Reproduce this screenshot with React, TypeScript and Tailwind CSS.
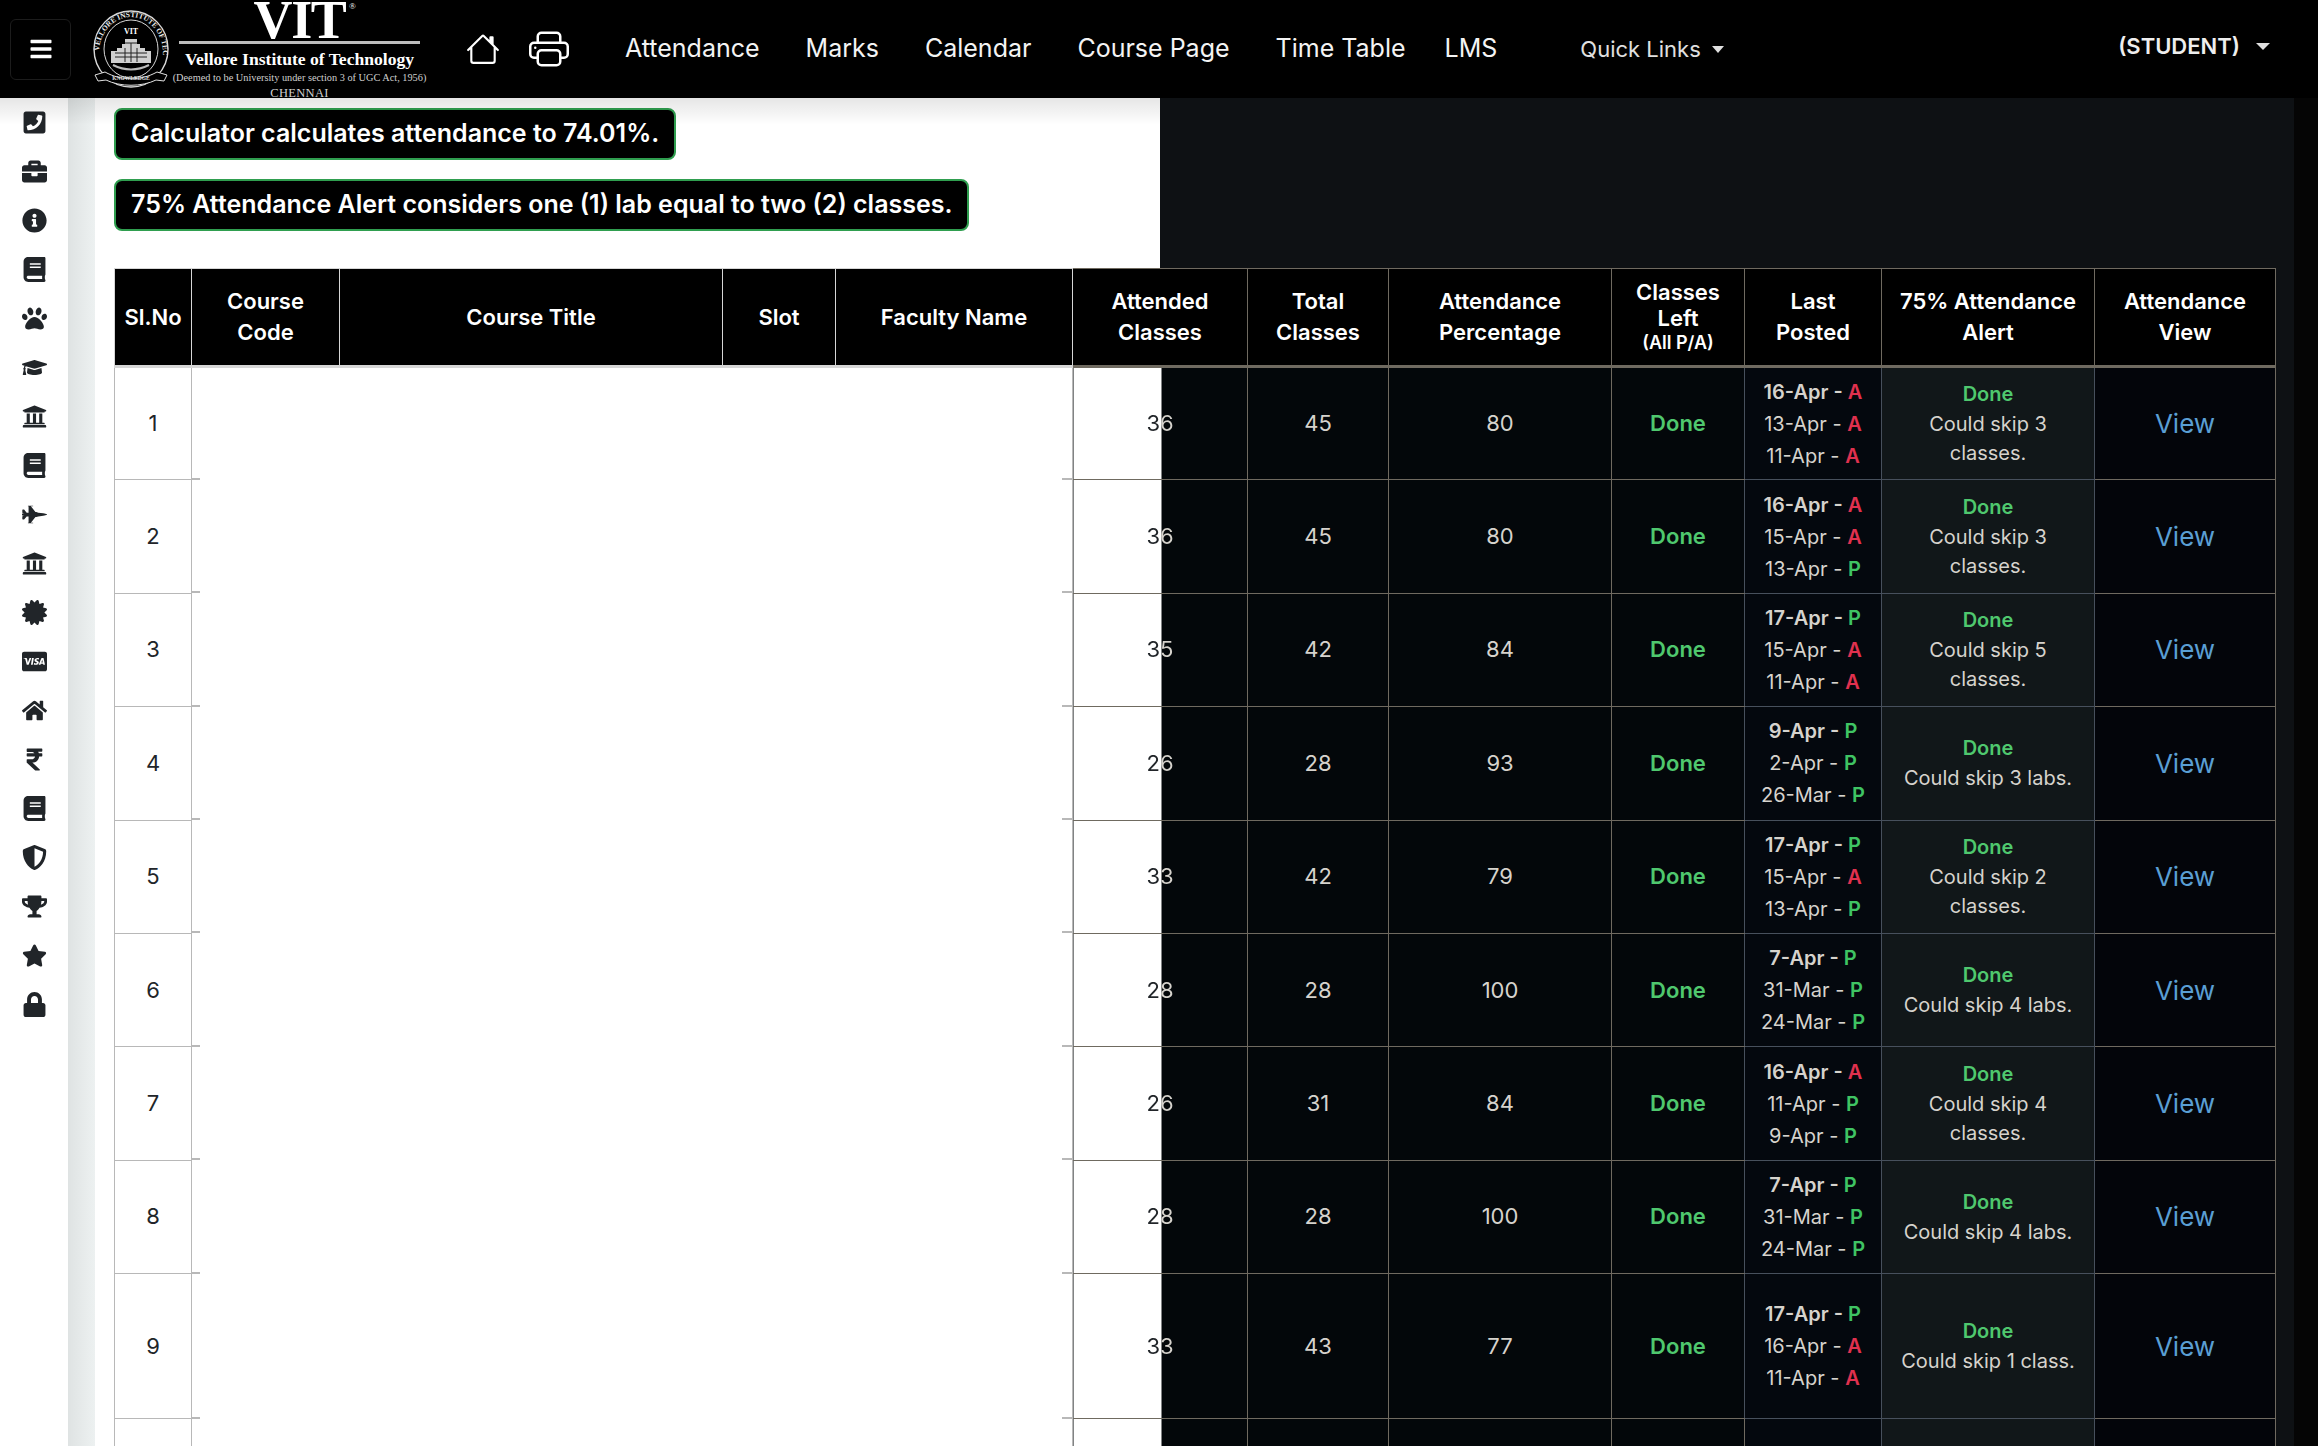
import { BsHouse, BsPrinter } from "react-icons/bs";
import {
  FaBars,
  FaBook,
  FaBriefcase,
  FaCcVisa,
  FaCertificate,
  FaFighterJet,
  FaGraduationCap,
  FaHome,
  FaInfoCircle,
  FaLock,
  FaPaw,
  FaPhoneSquare,
  FaRupeeSign,
  FaShieldAlt,
  FaStar,
  FaTrophy,
  FaUniversity,
} from "react-icons/fa";

type Mark = [string, "A" | "P"];

type Row = {
  no: number;
  attended: number;
  total: number;
  percent: number;
  posted: Mark[];
  skip: string;
};

const rows: Row[] = [
  { no: 1, attended: 36, total: 45, percent: 80, posted: [["16-Apr", "A"], ["13-Apr", "A"], ["11-Apr", "A"]], skip: "Could skip 3 classes." },
  { no: 2, attended: 36, total: 45, percent: 80, posted: [["16-Apr", "A"], ["15-Apr", "A"], ["13-Apr", "P"]], skip: "Could skip 3 classes." },
  { no: 3, attended: 35, total: 42, percent: 84, posted: [["17-Apr", "P"], ["15-Apr", "A"], ["11-Apr", "A"]], skip: "Could skip 5 classes." },
  { no: 4, attended: 26, total: 28, percent: 93, posted: [["9-Apr", "P"], ["2-Apr", "P"], ["26-Mar", "P"]], skip: "Could skip 3 labs." },
  { no: 5, attended: 33, total: 42, percent: 79, posted: [["17-Apr", "P"], ["15-Apr", "A"], ["13-Apr", "P"]], skip: "Could skip 2 classes." },
  { no: 6, attended: 28, total: 28, percent: 100, posted: [["7-Apr", "P"], ["31-Mar", "P"], ["24-Mar", "P"]], skip: "Could skip 4 labs." },
  { no: 7, attended: 26, total: 31, percent: 84, posted: [["16-Apr", "A"], ["11-Apr", "P"], ["9-Apr", "P"]], skip: "Could skip 4 classes." },
  { no: 8, attended: 28, total: 28, percent: 100, posted: [["7-Apr", "P"], ["31-Mar", "P"], ["24-Mar", "P"]], skip: "Could skip 4 labs." },
  { no: 9, attended: 33, total: 43, percent: 77, posted: [["17-Apr", "P"], ["16-Apr", "A"], ["11-Apr", "A"]], skip: "Could skip 1 class." },
];

const colWidths = [77, 148, 383, 113, 237, 175, 141, 223, 133, 137, 213, 181];

const sideIcons = [
  FaPhoneSquare,
  FaBriefcase,
  FaInfoCircle,
  FaBook,
  FaPaw,
  FaGraduationCap,
  FaUniversity,
  FaBook,
  FaFighterJet,
  FaUniversity,
  FaCertificate,
  FaCcVisa,
  FaHome,
  FaRupeeSign,
  FaBook,
  FaShieldAlt,
  FaTrophy,
  FaStar,
  FaLock,
];

const navLinks = ["Attendance", "Marks", "Calendar", "Course Page", "Time Table"];

function Seal() {
  return (
    <svg viewBox="0 0 84 84" className="w-[84px] h-[84px] shrink-0">
      <defs>
        <path id="sealArc" d="M10 46a32 36 0 1 1 64 0" />
      </defs>
      <ellipse cx="42" cy="42" rx="37" ry="38" fill="none" stroke="#d8d8d8" strokeWidth="1.4" />
      <ellipse cx="42" cy="42" rx="27" ry="29" fill="none" stroke="#d8d8d8" strokeWidth="1" />
      <text fontFamily="'Liberation Serif', serif" fontSize="7.4" fontWeight="700" fill="#e8e8e8">
        <textPath href="#sealArc" startOffset="2%">VELLORE INSTITUTE OF TECHNOLOGY</textPath>
      </text>
      <text x="42" y="27" textAnchor="middle" fontFamily="'Liberation Serif', serif" fontSize="8" fontWeight="700" fill="#fff">
        VIT
      </text>
      <path d="M22 56v-12h6v-3h5v-4h3v-5h12v5h3v4h5v3h6v12z" fill="#cfcfcf" />
      <path d="M26 46h32M26 50h32M36 36h12M36 41v14M42 36v19M48 41v14" stroke="#222" strokeWidth="1" />
      <path d="M24 58c12 6 24 6 36 0" fill="none" stroke="#bbb" strokeWidth="2" />
      <path d="M6 68l10-3c16 9 36 9 52 0l10 3-3 6-8-1c-14 7-36 7-50 0l-8 1z" fill="#000" stroke="#e0e0e0" strokeWidth="1" />
      <text x="42" y="73" textAnchor="middle" fontFamily="'Liberation Serif', serif" fontSize="5.5" fontWeight="700" fill="#e0e0e0">
        KNOWLEDGE
      </text>
    </svg>
  );
}

function Logo() {
  return (
    <div className="flex items-center h-full ml-[18px]">
      <Seal />
      <div className="ml-[6px] w-[241px] flex flex-col items-center text-white font-['Liberation_Serif',serif]">
        <div className="relative text-[54px] leading-[40px] font-bold tracking-tight h-[40px] mt-[2px]">
          VIT
          <span className="absolute top-[2px] -right-[9px] text-[9px] leading-none font-normal">®</span>
        </div>
        <div className="w-full h-[3px] bg-[#bdbdbd] mt-[1px]" />
        <div className="text-[17.6px] leading-[20px] font-bold mt-[5px] whitespace-nowrap">Vellore Institute of Technology</div>
        <div className="text-[10.3px] leading-[12px] mt-[3px] whitespace-nowrap text-[#d0d0d0]">
          (Deemed to be University under section 3 of UGC Act, 1956)
        </div>
        <div className="text-[12.5px] leading-[14px] mt-[2px] tracking-wide text-[#d0d0d0]">CHENNAI</div>
      </div>
    </div>
  );
}

function Navbar() {
  return (
    <nav className="h-[98px] shrink-0 bg-black flex items-center text-white font-['Inter',sans-serif]">
      <button className="ml-[10px] w-[61px] h-[61px] rounded-md border border-[#1c1c1c] flex items-center justify-center text-white text-[24px]">
        <FaBars />
      </button>
      <Logo />
      <BsHouse className="ml-[46px] text-[34px] shrink-0" />
      <BsPrinter className="ml-[29px] text-[40px] shrink-0" />
      <div className="ml-[56px] flex items-center gap-[46px] text-[25px] text-[#f4f4f4]">
        {navLinks.map((l) => (
          <a key={l}>{l}</a>
        ))}
      </div>
      <a className="ml-[39px] text-[25px] text-[#f4f4f4]">LMS</a>
      <div className="ml-[83px] flex items-center gap-[11px] text-[22px] text-[#e0e0e0]">
        Quick Links
        <span className="border-x-[6px] border-t-[7px] border-x-transparent border-t-[#e0e0e0]" />
      </div>
      <div className="ml-auto mr-[48px] mb-[6px] flex items-center gap-[16px] text-[22px] font-semibold text-[#eee]">
        (STUDENT)
        <span className="border-x-[7px] border-t-[7px] border-x-transparent border-t-[#e0e0e0]" />
      </div>
    </nav>
  );
}

function Sidebar() {
  return (
    <aside className="w-[68px] shrink-0 bg-white flex flex-col items-center pt-[11px] text-[#212529]">
      {sideIcons.map((Icon, i) => (
        <div key={i} className="h-[49px] shrink-0 flex items-start justify-center pt-[1px] text-[25px]">
          <Icon />
        </div>
      ))}
    </aside>
  );
}

function Alert({ text }: { text: string }) {
  return (
    <div className="w-fit h-[52px] px-[15px] flex items-center rounded-[8px] bg-black border-2 border-[#2f9e4f] text-white font-semibold text-[25px]">
      {text}
    </div>
  );
}

function HeaderCell({ label, sub, light }: { label: string[]; sub?: string; light?: boolean }) {
  return (
    <th
      className={`bg-black text-white font-semibold text-[22px] leading-[31px] border border-b-[3px] ${
        light ? "border-[#d6d6d6]" : "border-[#6f6a60]"
      }`}
    >
      {label.map((l) => (
        <div key={l}>{l}</div>
      ))}
      {sub && <div className="text-[18px] leading-[24px]">{sub}</div>}
    </th>
  );
}

function AttendanceTable() {
  const line = "border border-[#6f6a60]";
  const blueLine = "border border-[#47505c]";
  return (
    <table className="table-fixed border-collapse w-[2161px] font-['Inter',sans-serif] text-center text-[22px] text-[#d6d3cd]">
      <colgroup>
        {colWidths.map((w, i) => (
          <col key={i} style={{ width: w }} />
        ))}
      </colgroup>
      <thead>
        <tr className="h-[98px]">
          <HeaderCell label={["Sl.No"]} light />
          <HeaderCell label={["Course", "Code"]} light />
          <HeaderCell label={["Course Title"]} light />
          <HeaderCell label={["Slot"]} light />
          <HeaderCell label={["Faculty Name"]} light />
          <HeaderCell label={["Attended", "Classes"]} />
          <HeaderCell label={["Total", "Classes"]} />
          <HeaderCell label={["Attendance", "Percentage"]} />
          <th className="bg-black text-white font-semibold text-[22px] leading-[26px] border border-b-[3px] border-[#6f6a60]">
            <div>Classes</div>
            <div>Left</div>
            <div className="text-[18px] leading-[24px]">(All P/A)</div>
          </th>
          <HeaderCell label={["Last", "Posted"]} />
          <HeaderCell label={["75% Attendance", "Alert"]} />
          <HeaderCell label={["Attendance", "View"]} />
        </tr>
      </thead>
      <tbody>
        {rows.map((r) => (
          <tr key={r.no} className={r.no === 9 ? "h-[145px]" : "h-[113.4px]"}>
            <td className="bg-white text-[#212529] border border-[#b8b8b8]">{r.no}</td>
            <td
              colSpan={4}
              className="border-x border-x-[#b8b8b8] bg-white bg-[linear-gradient(90deg,#b8b8b8_8px,transparent_8px,transparent_calc(100%-10px),#b8b8b8_calc(100%-10px))] bg-[length:100%_2px] bg-bottom bg-no-repeat"
            />
            <td className={`${line} bg-[linear-gradient(90deg,#fff_88px,#03070a_88px)]`}>
              <span className="bg-[linear-gradient(90deg,#212529_50%,#d6d3cd_50%)] bg-clip-text text-transparent">
                {r.attended}
              </span>
            </td>
            <td className={`${line} bg-[#03070a]`}>{r.total}</td>
            <td className={`${line} bg-[#03070a]`}>{r.percent}</td>
            <td className={`${line} bg-[#03070a] border-r-[#47505c] font-semibold text-[#4fc86e]`}>Done</td>
            <td className={`${blueLine} bg-[#04080e] text-[20px] leading-[32px]`}>
              {r.posted.map(([date, mark], i) => (
                <div key={date} className={i === 0 ? "font-semibold" : ""}>
                  {date} - <span className={`font-semibold ${mark === "A" ? "text-[#e0314f]" : "text-[#3fc463]"}`}>{mark}</span>
                </div>
              ))}
            </td>
            <td className={`${blueLine} bg-[#111719] text-[20px] leading-[29px] px-[14px]`}>
              <div className="font-semibold text-[#4fc86e] leading-[31px]">Done</div>
              <div>{r.skip}</div>
            </td>
            <td className={`${line} bg-[#03050a] text-[26px] text-[#5a9fd4]`}>
              <a>View</a>
            </td>
          </tr>
        ))}
        <tr className="h-[113.4px]">
          <td className="bg-white border border-[#b8b8b8]" />
          <td colSpan={4} className="border-x border-x-[#b8b8b8] bg-white" />
          <td className={`${line} bg-[linear-gradient(90deg,#fff_88px,#03070a_88px)]`} />
          <td className={`${line} bg-[#03070a]`} />
          <td className={`${line} bg-[#03070a]`} />
          <td className={`${line} bg-[#03070a]`} />
          <td className={`${blueLine} bg-[#04080e]`} />
          <td className={`${blueLine} bg-[#111719]`} />
          <td className={`${line} bg-[#03050a]`} />
        </tr>
      </tbody>
    </table>
  );
}

export default function App() {
  return (
    <div className="h-screen overflow-hidden flex flex-col bg-[#050505] font-['Inter',sans-serif]">
      <Navbar />
      <div className="relative flex-1 min-h-0 flex overflow-hidden">
        <div className="absolute top-0 left-0 w-[1160px] h-[27px] bg-gradient-to-b from-black/10 to-transparent pointer-events-none z-10" />
        <Sidebar />
        <div className="w-[27px] shrink-0 bg-gradient-to-r from-[#dfe3e3] to-[#edf1f1]" />
        <main className="w-[2199px] shrink-0 pl-[19px] pt-[10px] bg-[linear-gradient(90deg,#fff_1065px,#0e1114_1065px)]">
          <div className="flex flex-col gap-[19px]">
            <Alert text="Calculator calculates attendance to 74.01%." />
            <Alert text="75% Attendance Alert considers one (1) lab equal to two (2) classes." />
          </div>
          <div className="mt-[37px]">
            <AttendanceTable />
          </div>
        </main>
      </div>
    </div>
  );
}
